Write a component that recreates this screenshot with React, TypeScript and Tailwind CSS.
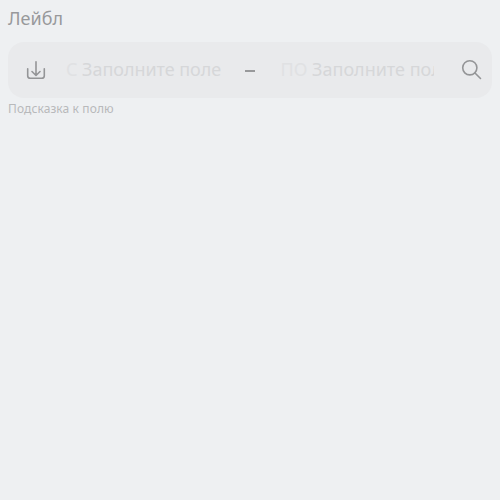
import React from 'react';

export default function App() {
  return (
    <main className="h-[500px] w-[500px] overflow-hidden bg-[#eef0f2] px-2 pt-1.5 font-['Noto_Sans',sans-serif]">
      <label className="block h-9 text-[18px] leading-6 text-[#98999b]">Лейбл</label>
      <div className="flex h-14 items-center rounded-2xl bg-[#e9eaec] text-[18px] leading-6 text-[#d6d7d9]">
        <svg className="ml-4 h-6 w-6 shrink-0 text-[#949597]" viewBox="0 0 24 24" fill="none" stroke="currentColor" strokeWidth="1.6" strokeLinecap="round" strokeLinejoin="round">
          <path d="M12 3.8v13.2M8 13.5l4 4 4-4M3.7 10.7v7q0 2.6 2.6 2.6h11.4q2.6 0 2.6-2.6v-7" />
        </svg>
        <div className="mb-0.5 ml-[18px] w-[155px] overflow-hidden whitespace-nowrap tracking-[-0.05px]"><span className="text-[#e0e1e3]">С </span>Заполните поле</div>
        <span className="ml-6 mt-0.5 h-0.5 w-2.5 bg-[#98999b]" />
        <div className="mb-0.5 ml-[25.5px] w-[153.5px] overflow-hidden whitespace-nowrap"><span className="text-[#e0e1e3]">ПО </span>Заполните поле</div>
        <svg className="ml-[26px] h-6 w-6 shrink-0 text-[#949597]" viewBox="0 0 24 24" fill="none" stroke="currentColor" strokeWidth="1.6" strokeLinecap="round">
          <circle cx="9.8" cy="9.8" r="7.1" /><path d="m15 15 5.5 5.5" />
        </svg>
      </div>
      <p className="mt-[3px] text-[12px] leading-4 tracking-[0.1px] text-[#b8b9bb]">Подсказка к полю</p>
    </main>
  );
}
